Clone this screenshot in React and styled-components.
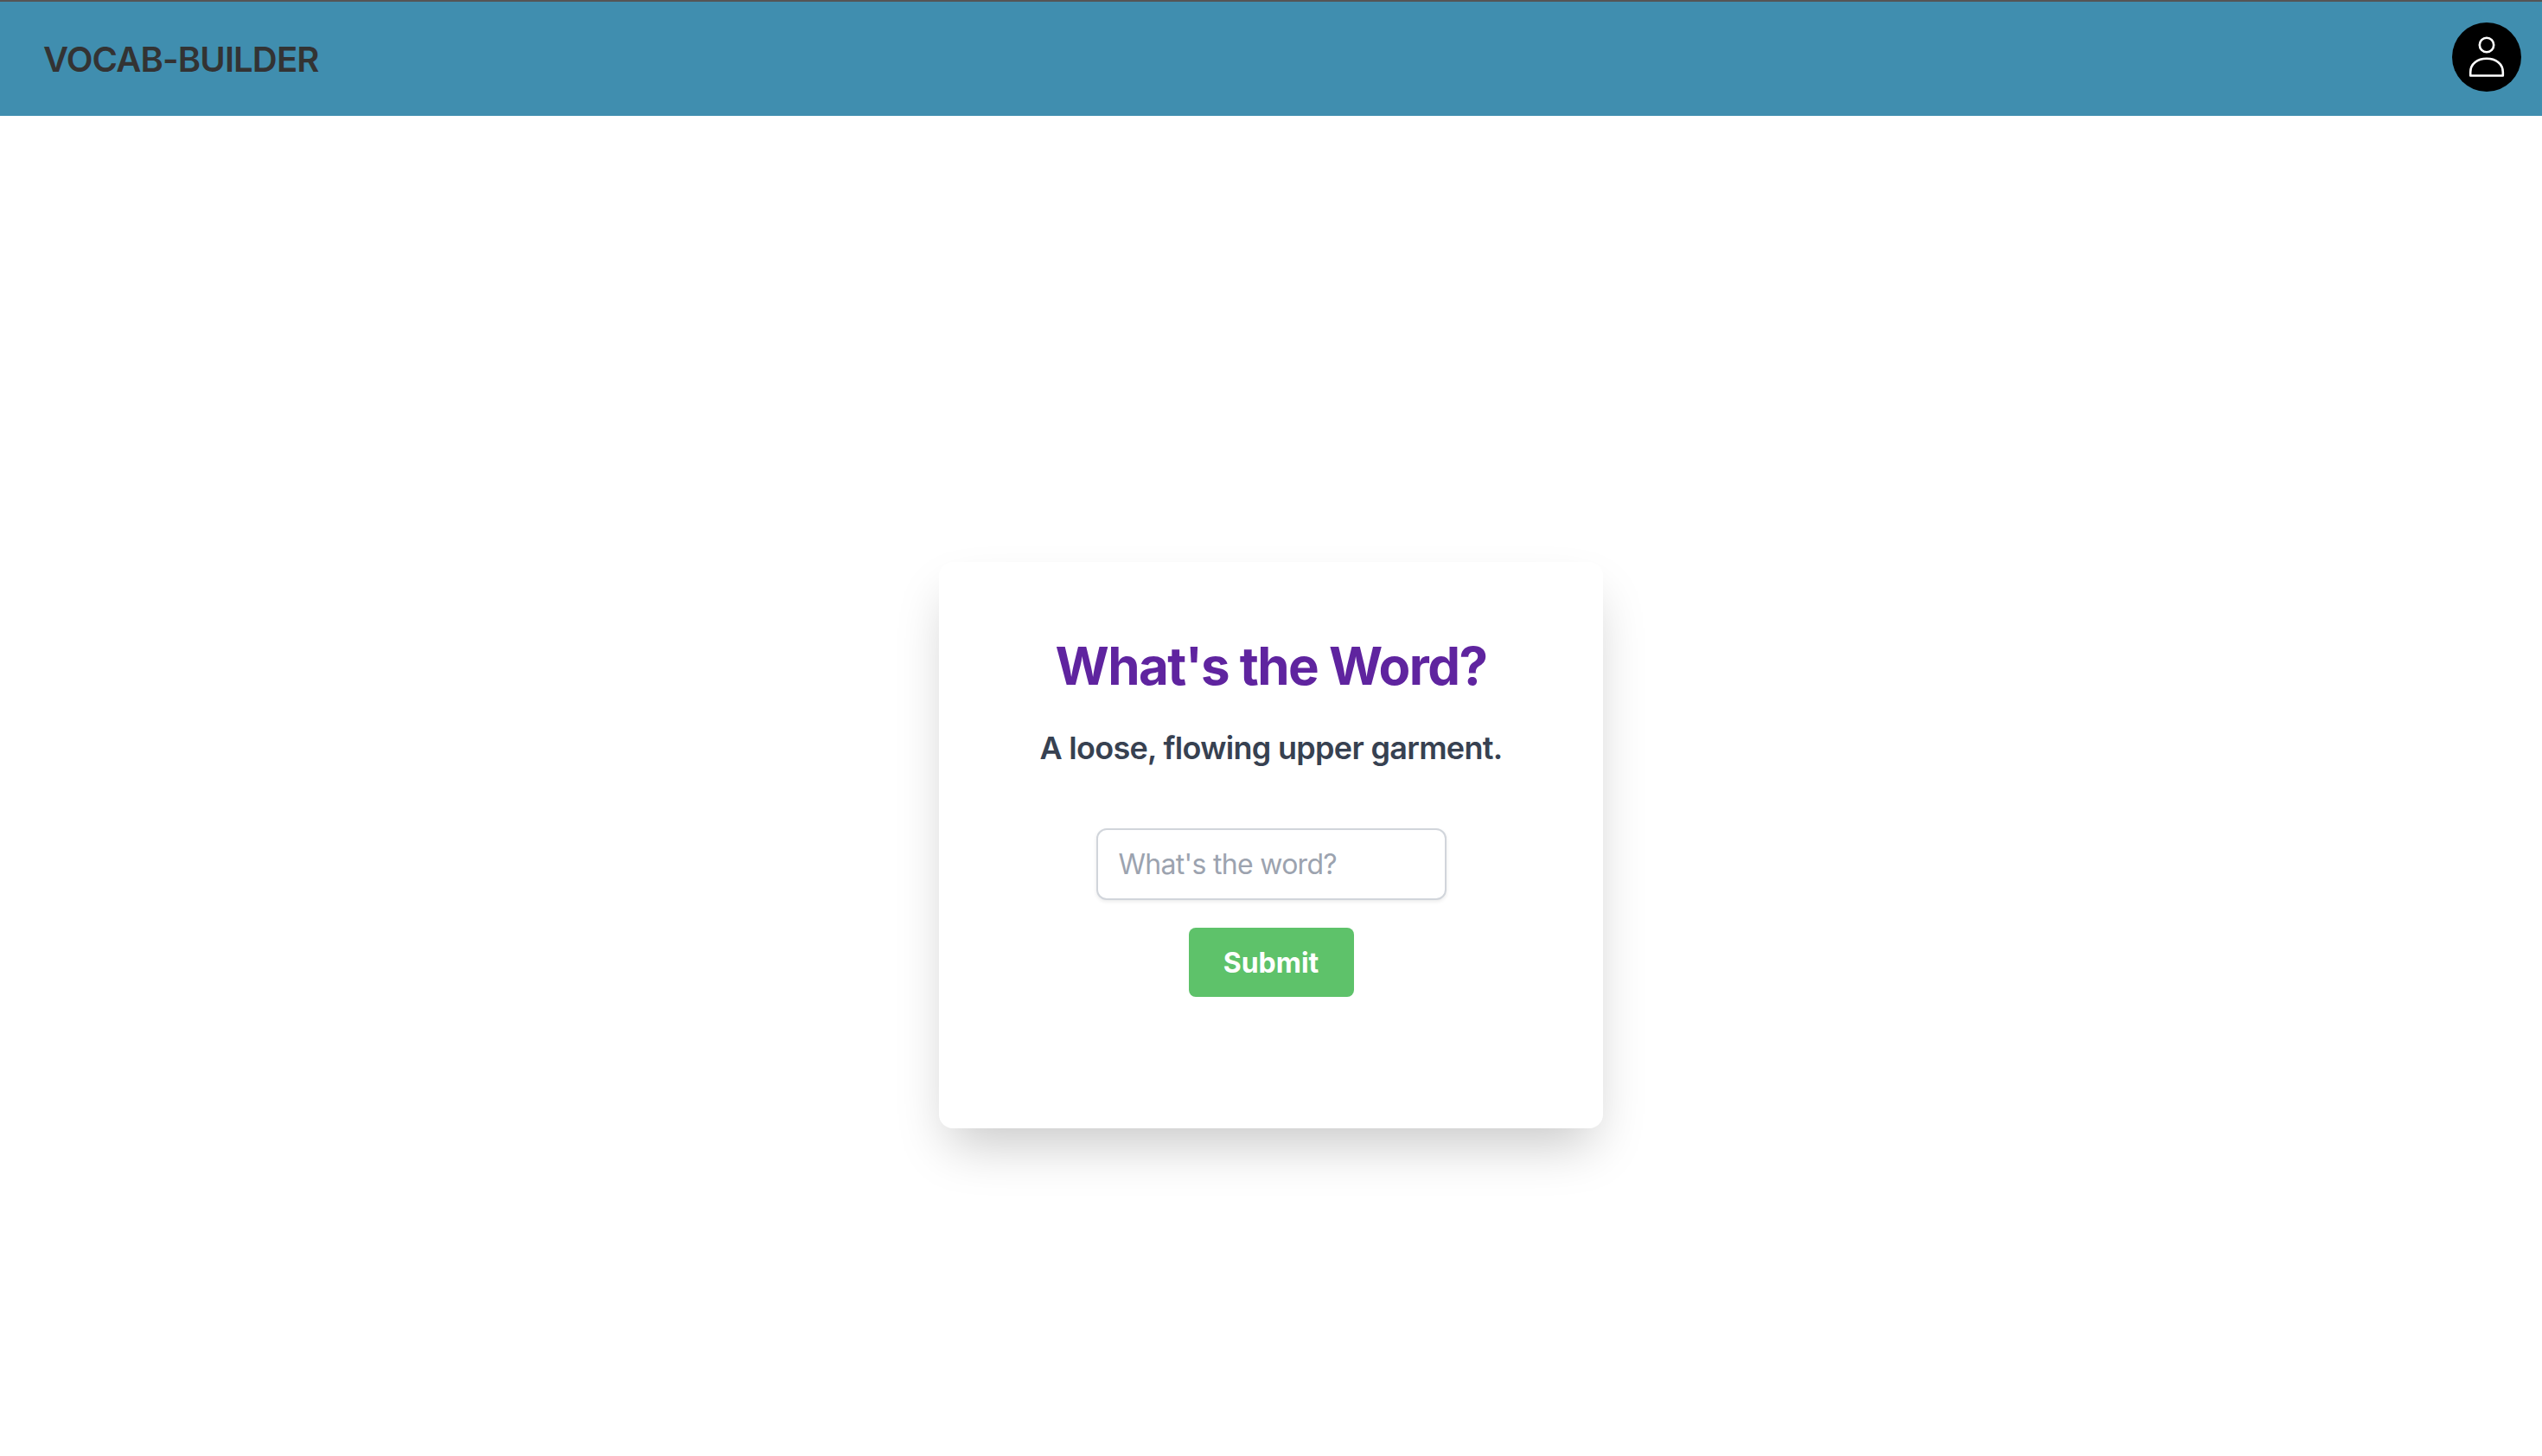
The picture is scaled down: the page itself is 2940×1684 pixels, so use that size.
import React from 'react';
import styled, { createGlobalStyle } from "styled-components"

const GlobalStyle = createGlobalStyle`
    html, body {
        margin: 0;
        padding: 0;
        background: #fff;
    }

    * {
        box-sizing: border-box;
    }

    body {
        font-family: Inter, "Liberation Sans", sans-serif;
    }
`

const App = () => {
    return (
        <Page>
            <GlobalStyle />
            <Navbar>
                <Brand>VOCAB-BUILDER</Brand>
                <Avatar type="button" aria-label="Account">
                    <svg width="80" height="80" viewBox="0 0 80 80" fill="none" stroke="#fff" strokeWidth="2.6" strokeLinejoin="round">
                        <circle cx="40" cy="26" r="8.2" />
                        <path d="M21.2 61.5V57.5C21.2 47.5 29.5 41.8 40 41.8C50.5 41.8 58.8 47.5 58.8 57.5V61.5Z" />
                    </svg>
                </Avatar>
            </Navbar>
            <Main>
                <Card>
                    <Heading>What's the Word?</Heading>
                    <Definition>A loose, flowing upper garment.</Definition>
                    <GuessForm onSubmit={e => e.preventDefault()}>
                        <GuessInput type="text" placeholder="What's the word?" />
                        <SubmitButton type="submit">Submit</SubmitButton>
                    </GuessForm>
                </Card>
            </Main>
        </Page>
    );
}

const Page = styled.div`
    min-height: 1684px;
    display: flex;
    flex-direction: column;
    background: #fff;
`

const Navbar = styled.header`
    height: 134px;
    display: flex;
    align-items: center;
    justify-content: space-between;
    padding: 0 24px 0 50px;
    background: #408eaf;
    border-top: 2px solid #555;
`

const Brand = styled.h1`
    margin: 2px 0 0;
    color: #333;
    font-size: 40px;
    font-weight: 600;
    line-height: 48px;
    letter-spacing: -0.85px;
`

const Avatar = styled.button`
    width: 80px;
    height: 80px;
    margin-bottom: 4px;
    padding: 0;
    border: 0;
    border-radius: 50%;
    background: #000;

    svg {
        display: block;
    }
`

const Main = styled.main`
    display: flex;
    justify-content: center;
    padding-top: 516px;
`

const Card = styled.section`
    width: 768px;
    height: 655px;
    padding: 82px 48px 0;
    display: flex;
    flex-direction: column;
    align-items: center;
    background: #fff;
    border-radius: 16px;
    box-shadow: 0 30px 60px -12px rgba(0, 0, 0, 0.22);
`

const Heading = styled.h2`
    margin: 0;
    color: #5f249f;
    font-size: 60px;
    font-weight: 700;
    line-height: 76px;
    letter-spacing: -1.55px;
    text-align: center;
`

const Definition = styled.p`
    margin: 33px 0 0;
    color: #374151;
    font-size: 36px;
    font-weight: 600;
    line-height: 48px;
    letter-spacing: -0.7px;
    text-align: center;
`

const GuessForm = styled.form`
    margin-top: 69px;
    display: flex;
    flex-direction: column;
    align-items: center;
    gap: 32px;
`

const GuessInput = styled.input`
    width: 405px;
    height: 83px;
    padding: 0 24px;
    border: 2.5px solid #d1d5db;
    border-radius: 12px;
    outline: none;
    color: #374151;
    background: #fff;
    font-family: inherit;
    font-size: 32px;
    letter-spacing: -0.7px;
    box-shadow: 0 2px 4px rgba(0, 0, 0, 0.08);

    &::placeholder {
        color: #9ca3af;
        opacity: 1;
    }
`

const SubmitButton = styled.button`
    width: 191px;
    height: 80px;
    padding: 0;
    border: 0;
    border-radius: 8px;
    color: #fff;
    background: #5ec26a;
    font-family: inherit;
    font-size: 32px;
    font-weight: 700;
`

export default App;
